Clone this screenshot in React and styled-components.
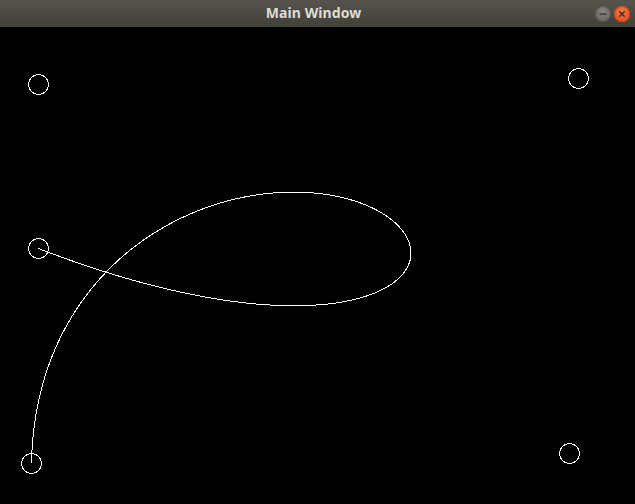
import React from "react";
import styled, { createGlobalStyle } from "styled-components";

const Global = createGlobalStyle`
  html, body { margin: 0; padding: 0; background: #000; }
  #root { width: 635px; height: 504px; }
`;

const Window = styled.div`
  width: 635px;
  height: 504px;
  display: flex;
  flex-direction: column;
  background: #000;
  overflow: hidden;
`;

const TitleBar = styled.div`
  height: 27px;
  flex: none;
  display: grid;
  grid-template-columns: 1fr auto 1fr;
  align-items: center;
  background: linear-gradient(to bottom, #57544e 0%, #4b4944 50%, #42403b 100%);
  box-sizing: border-box;
  padding: 0 5px 0 0;
`;

const Title = styled.div`
  grid-column: 2;
  font-family: "Noto Sans", "DejaVu Sans", sans-serif;
  font-weight: 700;
  font-size: 14px;
  color: #dfdbd2;
  letter-spacing: 0.1px;
  margin-right: 3px;
  line-height: 1;
  padding-bottom: 1px;
`;

const Buttons = styled.div`
  grid-column: 3;
  justify-self: end;
  display: flex;
  gap: 3px;
  align-items: center;
`;

const WinButton = styled.div`
  width: 16px;
  height: 16px;
  border-radius: 50%;
  display: flex;
  align-items: center;
  justify-content: center;
  background: ${(p) =>
    p.$kind === "close"
      ? "radial-gradient(circle at 50% 35%, #f47a4f 0%, #e95420 70%, #d04a1c 100%)"
      : "radial-gradient(circle at 50% 35%, #85837d 0%, #6d6b65 70%, #5c5a55 100%)"};
  box-shadow: inset 0 0 0 1px ${(p) => (p.$kind === "close" ? "#c9481b" : "#55534e")};
`;

const Canvas = styled.div`
  flex: 1;
  background: #000;
  display: flex;
`;

const OFFSET = 27;
const pts = {
  A: [38.5, 84.5],
  B: [38.5, 248.5],
  C: [31.5, 463.5],
  D: [578.5, 78.5],
  E: [569.5, 453.5],
};

function bezierPath(ctrl, n = 600) {
  const deg = ctrl.length - 1;
  const binom = [1, 4, 6, 4, 1];
  let d = "";
  for (let i = 0; i <= n; i++) {
    const t = i / n;
    let x = 0;
    let y = 0;
    for (let k = 0; k <= deg; k++) {
      const b = binom[k] * Math.pow(1 - t, deg - k) * Math.pow(t, k);
      x += b * ctrl[k][0];
      y += b * ctrl[k][1];
    }
    d += (i === 0 ? "M" : "L") + x.toFixed(2) + " " + (y - OFFSET).toFixed(2);
  }
  return d;
}

const curve = bezierPath([pts.C, pts.A, pts.D, pts.E, pts.B]);

export default function App() {
  return (
    <>
      <Global />
      <Window>
        <TitleBar>
          <Title>Main Window</Title>
          <Buttons>
            <WinButton $kind="min">
              <svg width="16" height="16" viewBox="0 0 16 16">
                <line x1="4.5" y1="8" x2="11.5" y2="8" stroke="#3a3935" strokeWidth="1.4" />
              </svg>
            </WinButton>
            <WinButton $kind="close">
              <svg width="16" height="16" viewBox="0 0 16 16">
                <path d="M5.3 5.3 L10.7 10.7 M10.7 5.3 L5.3 10.7" stroke="#3a2a22" strokeWidth="1.3" />
              </svg>
            </WinButton>
          </Buttons>
        </TitleBar>
        <Canvas>
          <svg width="635" height="477" viewBox="0 0 635 477">
            {Object.values(pts).map(([x, y], i) => (
              <circle
                key={i}
                cx={x}
                cy={y - OFFSET}
                r="10"
                fill="none"
                stroke="#fff"
                strokeWidth="1"
                shapeRendering="crispEdges"
              />
            ))}
            <path d={curve} fill="none" stroke="#fff" strokeWidth="1" shapeRendering="crispEdges" />
          </svg>
        </Canvas>
      </Window>
    </>
  );
}
